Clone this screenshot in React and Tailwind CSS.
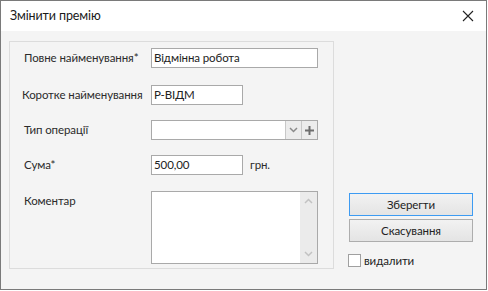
import React from "react";

const font = { fontFamily: 'Lato, "Noto Sans", sans-serif' };
const txt = " text-[11.5px] tracking-[-0.1px] ";

function Label({ children, className = "" }) {
  return <div className={"w-[127px] shrink-0 whitespace-nowrap text-[#2b2b2b]" + txt + className}>{children}</div>;
}

export default function App() {
  return (
    <div className="w-[488px] h-[291px] bg-white" style={font}>
      <div className="w-[487px] h-[290px] border border-[#7a7a7a] flex flex-col">
        <div className="h-[30px] bg-white flex items-center justify-between pl-[9px] pr-[12px] shrink-0">
          <span className="text-[12.5px] tracking-[-0.1px] text-[#1a1a1a]">Змінити премію</span>
          <svg width="12" height="12" viewBox="0 0 12 12">
            <path d="M1 1 L11 11 M11 1 L1 11" stroke="#222" strokeWidth="1.1" />
          </svg>
        </div>
        <div className="flex-1 bg-[#f4f4f4] flex pl-[8px] pt-[10px]">
          <div className="w-[325px] h-[228px] border border-[#dcdcdc] flex flex-col pl-[14px] pt-[6px]">
            <div className="flex items-center h-[20px]">
              <Label>Повне найменування*</Label>
              <div className={"w-[167px] h-[20px] bg-white border border-[#a9a9a9] text-[#222] px-[2px] leading-[18px]" + txt}>Відмінна робота</div>
            </div>
            <div className="flex items-center h-[20px] mt-[17px]">
              <Label className="ml-[-2px] w-[129px]">Коротке найменування</Label>
              <div className={"w-[92px] h-[20px] bg-white border border-[#a9a9a9] text-[#222] px-[2px] leading-[18px]" + txt}>Р-ВІДМ</div>
            </div>
            <div className="flex items-center h-[20px] mt-[15px]">
              <Label>Тип операції</Label>
              <div className="w-[167px] h-[20px] bg-white border border-[#a9a9a9] flex">
                <div className="flex-1" />
                <div className="w-[16px] h-full bg-[#ececec] border-l border-[#c8c8c8] flex items-center justify-center">
                  <svg width="9" height="6" viewBox="0 0 9 6">
                    <path d="M1 1 L4.5 4.5 L8 1" stroke="#8a8a8a" strokeWidth="1.5" fill="none" />
                  </svg>
                </div>
                <div className="w-[16px] h-full bg-[#ececec] border-l border-[#c8c8c8] flex items-center justify-center">
                  <svg width="9" height="9" viewBox="0 0 9 9">
                    <path d="M4.5 0 V9 M0 4.5 H9" stroke="#6e6e6e" strokeWidth="2" />
                  </svg>
                </div>
              </div>
            </div>
            <div className="flex items-center h-[20px] mt-[15px]">
              <Label>Сума*</Label>
              <div className={"w-[92px] h-[20px] bg-white border border-[#a9a9a9] text-[#222] px-[2px] leading-[18px]" + txt}>500,00</div>
              <span className={"ml-[7px] text-[#2b2b2b]" + txt}>грн.</span>
            </div>
            <div className="flex items-start mt-[16px]">
              <Label className="pt-[1px]">Коментар</Label>
              <div className="w-[167px] h-[73px] bg-white border border-[#a9a9a9] flex">
                <div className="flex-1" />
                <div className="w-[17px] h-full bg-[#ebebeb] flex flex-col items-center justify-between py-[6px]">
                  <svg width="9" height="6" viewBox="0 0 9 6">
                    <path d="M1 5 L4.5 1.5 L8 5" stroke="#c2c2c2" strokeWidth="1.5" fill="none" />
                  </svg>
                  <svg width="9" height="6" viewBox="0 0 9 6">
                    <path d="M1 1 L4.5 4.5 L8 1" stroke="#c2c2c2" strokeWidth="1.5" fill="none" />
                  </svg>
                </div>
              </div>
            </div>
          </div>
          <div className="flex flex-col pl-[15px] pt-[152px]">
            <button className={"w-[124px] h-[23px] border border-[#3d9bf2] bg-gradient-to-b from-[#f2f2f2] to-[#e4e4e4] text-[#222] flex items-center justify-center" + txt}>Зберегти</button>
            <button className={"w-[124px] h-[23px] mt-[3px] border border-[#adadad] bg-gradient-to-b from-[#f2f2f2] to-[#e4e4e4] text-[#222] flex items-center justify-center" + txt}>Скасування</button>
            <div className="flex items-center mt-[10px] ml-[-1px]">
              <div className="w-[13px] h-[13px] bg-white border border-[#a0a0a0]" />
              <span className={"ml-[3px] text-[#222]" + txt}>видалити</span>
            </div>
          </div>
        </div>
      </div>
    </div>
  );
}
